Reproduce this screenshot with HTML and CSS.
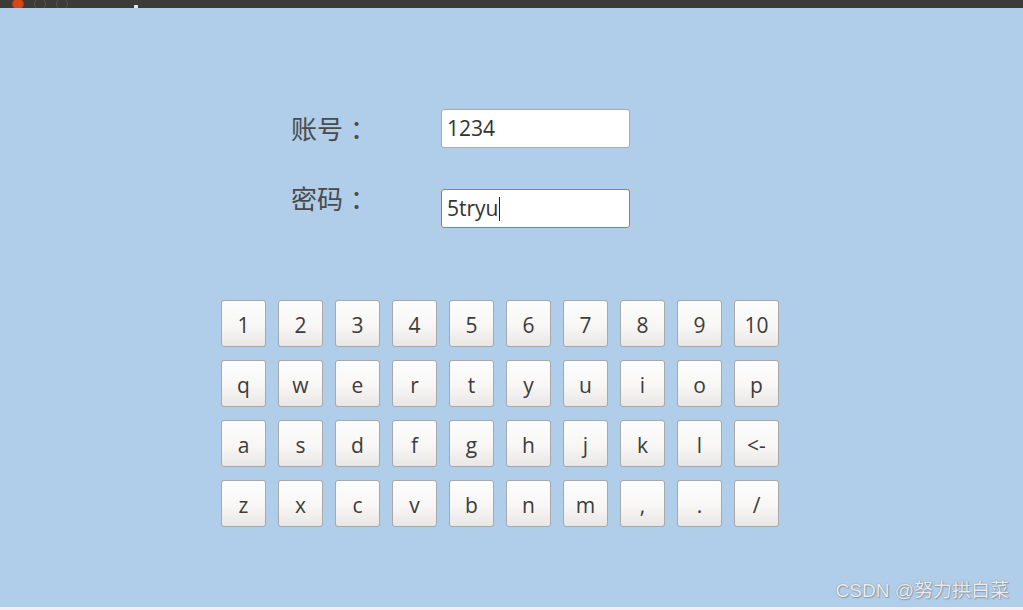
FILE: index.html
```html
<!DOCTYPE html>
<html lang="zh-CN">
<head>
<meta charset="utf-8">
<title>登录</title>
<link rel="stylesheet" href="styles.css">
</head>
<body>
<div class="app">
  <div class="titlebar">
    <span class="win-btn win-close"></span>
    <span class="win-btn"></span>
    <span class="win-btn"></span>
    <span class="win-icon"></span>
  </div>
  <div class="main">
    <div class="form">
      <div class="field-label label-account">账号<span class="colon">：</span></div>
      <div class="field-input">1234</div>
      <div class="field-label label-password">密码<span class="colon">：</span></div>
      <div class="field-input is-focused">5tryu<span class="caret"></span></div>
    </div>
    <div class="keyboard">
      <div class="key">1</div><div class="key">2</div><div class="key">3</div><div class="key">4</div><div class="key">5</div>
      <div class="key">6</div><div class="key">7</div><div class="key">8</div><div class="key">9</div><div class="key">10</div>
      <div class="key">q</div><div class="key">w</div><div class="key">e</div><div class="key">r</div><div class="key">t</div>
      <div class="key">y</div><div class="key">u</div><div class="key">i</div><div class="key">o</div><div class="key">p</div>
      <div class="key">a</div><div class="key">s</div><div class="key">d</div><div class="key">f</div><div class="key">g</div>
      <div class="key">h</div><div class="key">j</div><div class="key">k</div><div class="key">l</div><div class="key">&lt;-</div>
      <div class="key">z</div><div class="key">x</div><div class="key">c</div><div class="key">v</div><div class="key">b</div>
      <div class="key">n</div><div class="key">m</div><div class="key">,</div><div class="key">.</div><div class="key">/</div>
    </div>
    <div class="watermark">CSDN @努力拱白菜</div>
  </div>
  <div class="bottom-strip"></div>
</div>
</body>
</html>
```
FILE: styles.css
```css
html, body {
  margin: 0;
  padding: 0;
}
body {
  font-family: "Open Sans", "Noto Sans CJK SC", sans-serif;
  background: #b0cdea;
}
.app {
  width: 1023px;
  height: 610px;
  display: flex;
  flex-direction: column;
  overflow: hidden;
}
.titlebar {
  height: 8px;
  flex: none;
  background: #3c3b37;
  display: flex;
  align-items: flex-end;
  padding-left: 12px;
  gap: 10px;
  overflow: hidden;
}
.win-btn {
  width: 10px;
  height: 10px;
  border-radius: 50%;
  border: 1px solid #55534e;
  margin-bottom: -2px;
  flex: none;
}
.win-close {
  background: #d9461a;
  border-color: #b53a10;
}
.win-icon {
  width: 4px;
  height: 3px;
  margin-left: 56px;
  background: #dfe6ef;
}
.main {
  flex: 1;
  position: relative;
  background: #b0cdea;
  padding-top: 101px;
}
.form {
  margin-left: 291px;
  display: grid;
  grid-template-columns: 150px 189px;
  grid-auto-rows: 39px;
  row-gap: 41px;
}
.field-label {
  font-family: "Noto Sans CJK SC", sans-serif;
  font-size: 26px;
  line-height: 26px;
  color: #4a4a4a;
  align-self: start;
}
.colon {
  display: inline-block;
  padding-left: 7px;
}
.label-account {
  margin-top: 6px;
}
.label-password {
  margin-top: -4px;
}
.field-input {
  box-sizing: border-box;
  height: 39px;
  background: #ffffff;
  border: 1px solid #a9aaab;
  border-radius: 3px;
  padding-left: 5px;
  font-size: 21px;
  line-height: 37px;
  color: #333333;
  display: flex;
  align-items: center;
}
.field-input.is-focused {
  border-color: #e0643a;
}
.caret {
  display: inline-block;
  width: 1px;
  height: 24px;
  background: #222;
  margin-left: 1px;
}
.keyboard {
  margin-left: 221px;
  margin-top: 72px;
  display: grid;
  grid-template-columns: repeat(10, 45px);
  grid-auto-rows: 47px;
  column-gap: 12px;
  row-gap: 13px;
}
.key {
  box-sizing: border-box;
  border: 1px solid #a8a8a8;
  border-radius: 3px;
  background: linear-gradient(#fdfdfd 0%, #f8f7f6 55%, #e9e7e5 100%);
  display: flex;
  align-items: center;
  justify-content: center;
  font-size: 21px;
  color: #3c3c3c;
  padding-top: 2px;
}
.watermark {
  position: absolute;
  right: 14px;
  bottom: 5px;
  font-family: "Liberation Sans", "Noto Sans CJK SC", sans-serif;
  font-size: 19px;
  color: #ececec;
  text-shadow: 0 0 1px #6f7780, 1px 1px 1px rgba(80, 90, 100, 0.4);
}
.bottom-strip {
  height: 3px;
  flex: none;
  background: #f2f1f0;
}
```
